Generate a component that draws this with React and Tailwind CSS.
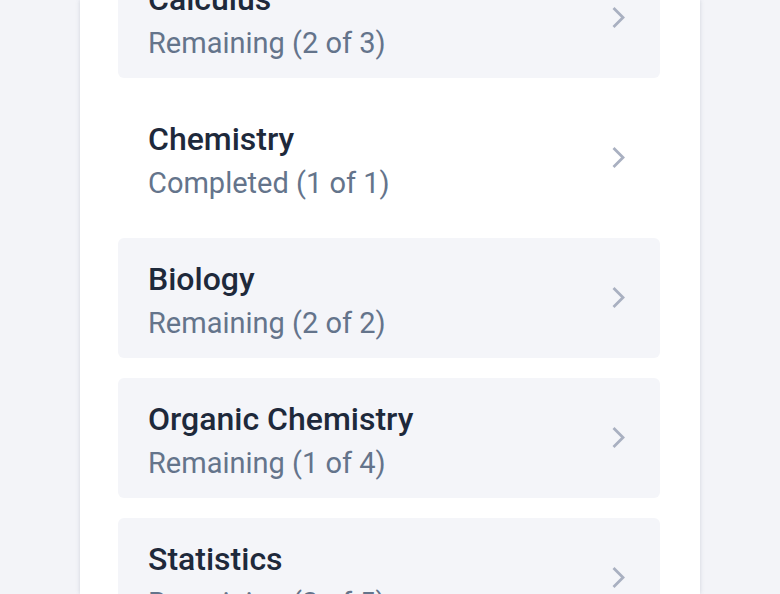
const courses = [
  { name: "Calculus", status: "Remaining (2 of 3)", shaded: true },
  { name: "Chemistry", status: "Completed (1 of 1)", shaded: false },
  { name: "Biology", status: "Remaining (2 of 2)", shaded: true },
  { name: "Organic Chemistry", status: "Remaining (1 of 4)", shaded: true },
  { name: "Statistics", status: "Remaining (3 of 5)", shaded: true },
];

const Chevron = () => (
  <svg width="14" height="22" viewBox="0 0 14 22" fill="none">
    <polyline
      points="2.5,2 11,10.5 2.5,19"
      stroke="#a9b0c1"
      strokeWidth="2.8"
      strokeLinecap="square"
    />
  </svg>
);

const CourseRow = ({ name, status, shaded }) => (
  <div
    className={`flex items-center justify-between h-[120px] pl-[30px] pr-[34px] rounded-md ${
      shaded ? "bg-[#f4f5f9]" : "bg-white"
    }`}
  >
    <div className="flex flex-col mt-[6px]">
      <span className="text-[32px] leading-[44px] font-medium text-[#1e293b]">
        {name}
      </span>
      <span className="text-[29px] leading-[44px] text-[#64748b]">{status}</span>
    </div>
    <Chevron />
  </div>
);

export default function App() {
  return (
    <div
      className="h-[594px] overflow-hidden bg-[#f3f4f8]"
      style={{ fontFamily: "Roboto, 'Liberation Sans', sans-serif" }}
    >
      <div className="mx-auto flex flex-col w-[620px] h-full bg-white shadow-[0_0_4px_rgba(100,110,140,0.25)] pl-[38px] pr-[40px]">
        <div className="flex flex-col gap-5 -mt-[42px]">
          {courses.map((c) => (
            <CourseRow key={c.name} {...c} />
          ))}
        </div>
      </div>
    </div>
  );
}
